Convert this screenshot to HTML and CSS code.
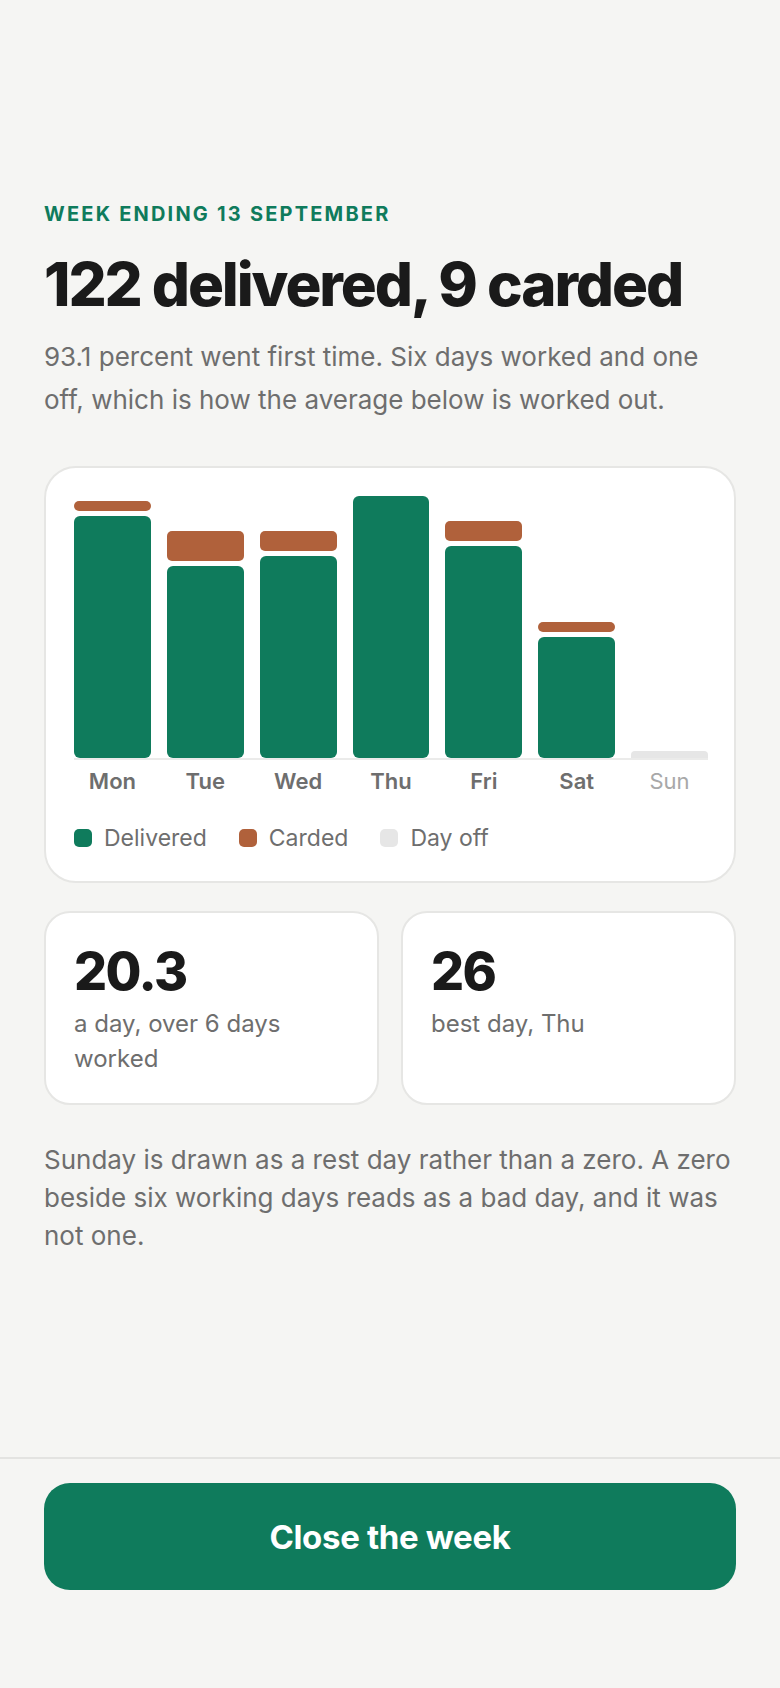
FILE: index.html
```html
<!DOCTYPE html>
<html>
<head>
  <meta charset="utf-8">
  <title>Week ending 13 September</title>
  <link rel="stylesheet" href="styles.css">
</head>
<body>
  <div class="page">
    <main class="content">
      <p class="eyebrow">Week ending 13 September</p>
      <h1>122 delivered, 9 carded</h1>
      <p class="lead">93.1 percent went first time. Six days worked and one off, which is how the average below is worked out.</p>

      <section class="chart-card">
        <div class="plot">
          <div class="stack">
            <div class="seg carded" style="height: 10px"></div>
            <div class="seg delivered" style="height: 242px"></div>
          </div>
          <div class="stack">
            <div class="seg carded" style="height: 30px"></div>
            <div class="seg delivered" style="height: 192px"></div>
          </div>
          <div class="stack">
            <div class="seg carded" style="height: 20px"></div>
            <div class="seg delivered" style="height: 202px"></div>
          </div>
          <div class="stack">
            <div class="seg delivered" style="height: 262px"></div>
          </div>
          <div class="stack">
            <div class="seg carded" style="height: 20px"></div>
            <div class="seg delivered" style="height: 212px"></div>
          </div>
          <div class="stack">
            <div class="seg carded" style="height: 10px"></div>
            <div class="seg delivered" style="height: 121px"></div>
          </div>
          <div class="stack">
            <div class="seg rest"></div>
          </div>
        </div>
        <div class="days">
          <span>Mon</span>
          <span>Tue</span>
          <span>Wed</span>
          <span>Thu</span>
          <span>Fri</span>
          <span>Sat</span>
          <span class="off">Sun</span>
        </div>
        <div class="legend">
          <span class="key"><i class="swatch delivered"></i>Delivered</span>
          <span class="key"><i class="swatch carded"></i>Carded</span>
          <span class="key"><i class="swatch rest"></i>Day off</span>
        </div>
      </section>

      <div class="stats">
        <div class="stat">
          <div class="num">20.3</div>
          <div class="what">a day, over 6 days worked</div>
        </div>
        <div class="stat">
          <div class="num">26</div>
          <div class="what">best day, Thu</div>
        </div>
      </div>

      <p class="note">Sunday is drawn as a rest day rather than a zero. A zero beside six working days reads as a bad day, and it was not one.</p>
    </main>

    <footer class="bar">
      <button class="close-btn">Close the week</button>
    </footer>
  </div>
</body>
</html>
```

FILE: styles.css
```css
* {
  margin: 0;
  padding: 0;
  box-sizing: border-box;
}

body {
  font-family: 'Inter', 'Noto Sans', sans-serif;
  background: #f5f5f3;
  color: #1a1a1a;
}

.page {
  min-height: 100vh;
  display: flex;
  flex-direction: column;
}

.content {
  flex: 1;
  display: flex;
  flex-direction: column;
  justify-content: center;
  padding: 0 44px;
}

.eyebrow {
  font-size: 20px;
  line-height: 24px;
  font-weight: 700;
  letter-spacing: 0.11em;
  text-transform: uppercase;
  color: #0f7b5c;
  margin-bottom: 25px;
}

h1 {
  font-size: 60px;
  line-height: 67px;
  font-weight: 800;
  letter-spacing: -0.035em;
  color: #1a1a1a;
}

.lead {
  margin-top: 17px;
  font-size: 26px;
  line-height: 43px;
  color: #6e6e6e;
}

/* chart */
.chart-card {
  margin-top: 45px;
  background: #fff;
  border: 2px solid #e6e6e4;
  border-radius: 32px;
  padding: 28px 26px 29px 28px;
}

.plot {
  display: grid;
  grid-template-columns: repeat(7, 1fr);
  gap: 16px;
  height: 264px;
  align-items: end;
  border-bottom: 2px solid #ebebea;
}

.stack {
  display: flex;
  flex-direction: column;
  justify-content: flex-end;
  gap: 5px;
}

.seg {
  border-radius: 6px;
}

.seg.carded {
  border-radius: 5px;
}

.delivered { background: #0f7b5c; }
.carded { background: #b0613b; }
.rest { background: #e6e6e6; }

.seg.rest {
  height: 7px;
  border-radius: 4px 4px 0 0;
}

.days {
  display: grid;
  grid-template-columns: repeat(7, 1fr);
  gap: 16px;
  margin-top: 8px;
  text-align: center;
  font-size: 22px;
  line-height: 26px;
  font-weight: 600;
  color: #6e6e6e;
}

.days .off {
  font-weight: 400;
  color: #a8a8a8;
}

.legend {
  display: flex;
  gap: 32px;
  margin-top: 30px;
  font-size: 23px;
  line-height: 28px;
  color: #6e6e6e;
}

.key {
  display: flex;
  align-items: center;
  gap: 12px;
}

.swatch {
  width: 18px;
  height: 18px;
  border-radius: 5px;
}

/* stats */
.stats {
  display: grid;
  grid-template-columns: 1fr 1fr;
  gap: 22px;
  margin-top: 28px;
}

.stat {
  background: #fff;
  border: 2px solid #e6e6e4;
  border-radius: 26px;
  padding: 30px 28px 26px;
  min-height: 194px;
}

.num {
  font-size: 52px;
  line-height: 57px;
  font-weight: 800;
  letter-spacing: -0.03em;
}

.what {
  margin-top: 6px;
  font-size: 24px;
  line-height: 35px;
  color: #6e6e6e;
}

.note {
  margin-top: 36px;
  font-size: 26px;
  line-height: 38px;
  color: #6e6e6e;
}

/* bottom bar */
.bar {
  border-top: 2px solid #e3e3e1;
  padding: 24px 44px 98px;
}

.close-btn {
  display: block;
  width: 100%;
  height: 107px;
  border: none;
  border-radius: 26px;
  background: #0f7b5c;
  color: #fff;
  font-family: inherit;
  font-size: 33px;
  font-weight: 700;
  letter-spacing: -0.01em;
  cursor: pointer;
}
```
